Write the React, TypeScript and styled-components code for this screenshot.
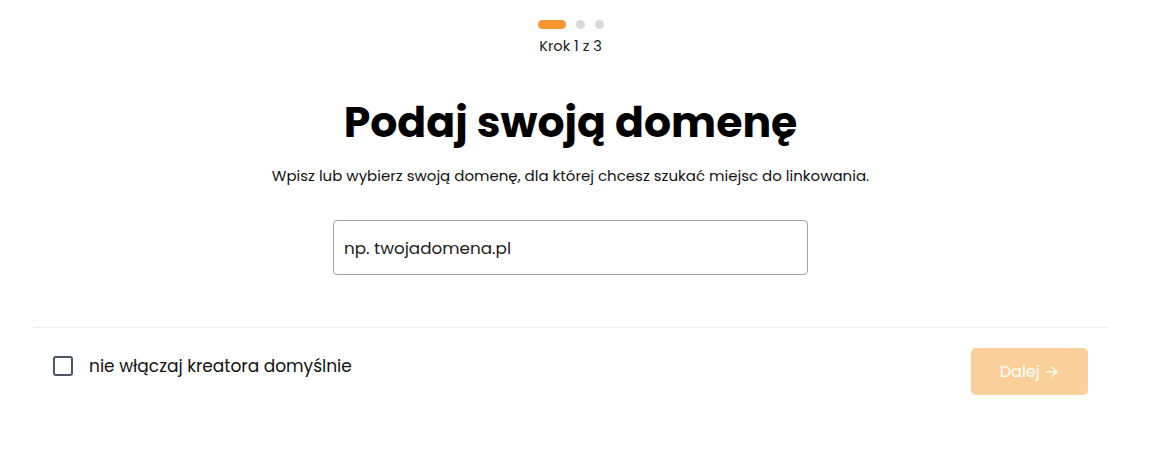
import React, { useState } from 'react';
import styled, { createGlobalStyle } from 'styled-components';

const GlobalStyle = createGlobalStyle`
  html, body {
    margin: 0;
    padding: 0;
    background: #ffffff;
  }
  body {
    font-family: Poppins, Inter, "Noto Sans", sans-serif;
    color: #111111;
  }
`;

const Wizard = styled.div`
  width: 1075px;
  margin-left: 33px;
  padding-top: 20px;
  display: flex;
  flex-direction: column;
`;

const Steps = styled.div`
  display: flex;
  flex-direction: column;
  align-items: center;
  gap: 7px;
`;

const Dots = styled.div`
  display: flex;
  align-items: center;
  gap: 10px;
`;

const Dot = styled.span<{ $active?: boolean }>`
  display: block;
  height: 9px;
  width: ${(p) => (p.$active ? '28px' : '9px')};
  border-radius: 999px;
  background: ${(p) => (p.$active ? '#f7962f' : '#d9d9d9')};
`;

const StepLabel = styled.div`
  font-size: 14.6px;
  line-height: 20px;
  color: #222222;
`;

const Body = styled.div`
  display: flex;
  flex-direction: column;
  align-items: center;
  padding-top: 38px;
  padding-bottom: 52px;
`;

const Title = styled.h1`
  margin: 0;
  font-size: 42.6px;
  line-height: 56px;
  font-weight: 700;
  color: #000000;
`;

const Subtitle = styled.p`
  margin: 16px 0 0;
  font-size: 15px;
  line-height: 20px;
  color: #111111;
`;

const DomainInput = styled.input`
  box-sizing: border-box;
  margin-top: 34px;
  width: 475px;
  height: 55px;
  padding: 0 10px;
  border: 1px solid #a3a3a3;
  border-radius: 4px;
  font-family: inherit;
  font-size: 16.8px;
  color: #111111;
  outline: none;
  &::placeholder {
    color: #1c1c1c;
    opacity: 1;
  }
`;

const Divider = styled.hr`
  margin: 0;
  border: 0;
  border-top: 1px solid #ececec;
`;

const Footer = styled.div`
  display: flex;
  align-items: center;
  justify-content: space-between;
  padding: 20px 20px;
`;

const CheckLabel = styled.label`
  display: flex;
  align-items: center;
  gap: 16px;
  margin-bottom: 12px;
  font-size: 17px;
  color: #111111;
  cursor: pointer;
`;

const Box = styled.span<{ $checked: boolean }>`
  box-sizing: border-box;
  width: 20px;
  height: 20px;
  border: 2px solid #4a5664;
  border-radius: 3px;
  background: ${(p) => (p.$checked ? '#4a5664' : '#ffffff')};
`;

const NextButton = styled.button`
  width: 117px;
  height: 47px;
  border: 0;
  border-radius: 5px;
  background: #fbcf99;
  color: #ffffff;
  font-family: inherit;
  font-size: 16px;
  cursor: not-allowed;
`;

export default function App() {
  const [checked, setChecked] = useState(false);
  return (
    <>
      <GlobalStyle />
      <Wizard>
        <Steps>
          <Dots>
            <Dot $active />
            <Dot />
            <Dot />
          </Dots>
          <StepLabel>Krok 1 z 3</StepLabel>
        </Steps>
        <Body>
          <Title>Podaj swoją domenę</Title>
          <Subtitle>Wpisz lub wybierz swoją domenę, dla której chcesz szukać miejsc do linkowania.</Subtitle>
          <DomainInput placeholder="np. twojadomena.pl" />
        </Body>
        <Divider />
        <Footer>
          <CheckLabel onClick={() => setChecked(!checked)}>
            <Box $checked={checked} />
            nie włączaj kreatora domyślnie
          </CheckLabel>
          <NextButton disabled>Dalej →</NextButton>
        </Footer>
      </Wizard>
    </>
  );
}
